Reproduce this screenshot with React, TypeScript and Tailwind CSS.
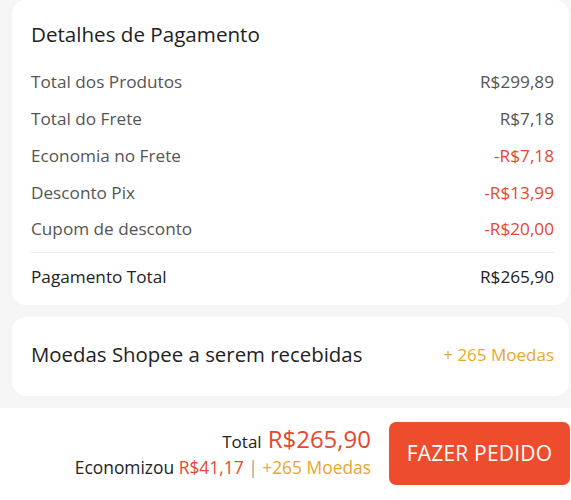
import React from "react";

type Row = { label: string; value: string; red?: boolean };

const rows: Row[] = [
  { label: "Total dos Produtos", value: "R$299,89" },
  { label: "Total do Frete", value: "R$7,18" },
  { label: "Economia no Frete", value: "-R$7,18", red: true },
  { label: "Desconto Pix", value: "-R$13,99", red: true },
  { label: "Cupom de desconto", value: "-R$20,00", red: true },
];

export default function App() {
  return (
    <div
      className="w-[571px] h-[500px] overflow-hidden bg-[#f5f5f5] flex flex-col"
      style={{ fontFamily: '"Open Sans", "Noto Sans", sans-serif' }}
    >
      {/* detalhes */}
      <div className="ml-[12px] mr-[2px] bg-white rounded-[14px] pt-[20px] pb-[11px] pl-[19px] pr-[15px]">
        <h2 className="text-[20.6px] leading-[28px] text-[#222]">Detalhes de Pagamento</h2>
        <div className="mt-[16px]">
          {rows.map((r) => (
            <div key={r.label} className="flex justify-between items-center h-[36.7px] text-[17.2px]">
              <span className="text-[#555]">{r.label}</span>
              <span className={r.red ? "text-[#e5472f]" : "text-[#555]"}>{r.value}</span>
            </div>
          ))}
        </div>
        <div className="mt-[5px] h-px bg-[#ececec]" />
        <div className="mt-[5px] flex justify-between items-center h-[36px] text-[17.2px] text-[#222]">
          <span>Pagamento Total</span>
          <span>R$265,90</span>
        </div>
      </div>

      {/* moedas */}
      <div className="mt-[12px] ml-[12px] mr-[2px] h-[79px] bg-white rounded-[14px] pl-[19px] pr-[15px] pb-[5px] flex justify-between items-center">
        <span className="text-[20.4px] text-[#222]">Moedas Shopee a serem recebidas</span>
        <span className="text-[17px] text-[#eba62a]">+ 265 Moedas</span>
      </div>

      {/* rodape */}
      <div className="mt-[12px] flex-1 bg-white flex items-start pt-[14px]">
        <div className="flex-1 flex flex-col items-end pr-[18px] pt-[2px]">
          <div className="flex items-baseline gap-[6px]">
            <span className="text-[17px] text-[#222]">Total</span>
            <span className="text-[24px] leading-[30px] text-[#e5472f]">R$265,90</span>
          </div>
          <div className="text-[17.4px] leading-[24px] text-[#222]">
            Economizou <span className="text-[#e5472f]">R$41,17</span>{" "}
            <span className="text-[#999]">|</span>{" "}
            <span className="text-[#eba62a]">+265 Moedas</span>
          </div>
        </div>
        <button className="w-[181px] h-[63px] mr-px bg-[#ee4d2d] rounded-[7px] text-white text-[21px] tracking-[0.2px]">
          FAZER PEDIDO
        </button>
      </div>
    </div>
  );
}
